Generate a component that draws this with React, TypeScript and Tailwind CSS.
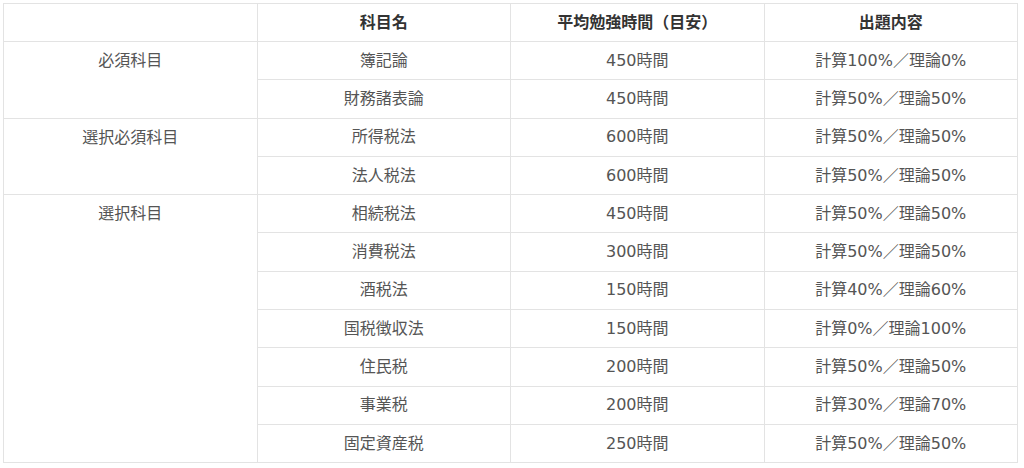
const groups = [
  {
    name: '必須科目',
    rows: [
      ['簿記論', '450時間', '計算100%／理論0%'],
      ['財務諸表論', '450時間', '計算50%／理論50%'],
    ],
  },
  {
    name: '選択必須科目',
    rows: [
      ['所得税法', '600時間', '計算50%／理論50%'],
      ['法人税法', '600時間', '計算50%／理論50%'],
    ],
  },
  {
    name: '選択科目',
    rows: [
      ['相続税法', '450時間', '計算50%／理論50%'],
      ['消費税法', '300時間', '計算50%／理論50%'],
      ['酒税法', '150時間', '計算40%／理論60%'],
      ['国税徴収法', '150時間', '計算0%／理論100%'],
      ['住民税', '200時間', '計算50%／理論50%'],
      ['事業税', '200時間', '計算30%／理論70%'],
      ['固定資産税', '250時間', '計算50%／理論50%'],
    ],
  },
]

const cell = 'border border-[#e3e3e3] px-2 text-center align-middle'

export default function App() {
  return (
    <div className="min-h-screen bg-white pt-[3px] pl-[3px] font-['DejaVu_Sans','Noto_Sans_CJK_JP',sans-serif] text-[16px] leading-6 text-[#555]">
      <table className="w-[1015px] table-fixed border-collapse">
        <thead>
          <tr className="h-[38px]">
            <th className={cell}></th>
            <th className={`${cell} font-bold text-[#333]`}>科目名</th>
            <th className={`${cell} font-bold text-[#333]`}>平均勉強時間（目安）</th>
            <th className={`${cell} font-bold text-[#333]`}>出題内容</th>
          </tr>
        </thead>
        <tbody>
          {groups.map((g) =>
            g.rows.map((r, i) => (
              <tr key={g.name + r[0]} className="h-[38.3px]">
                {i === 0 && (
                  <td rowSpan={g.rows.length} className={`${cell} !align-top pt-[7px]`}>
                    {g.name}
                  </td>
                )}
                <td className={cell}>{r[0]}</td>
                <td className={cell}>{r[1]}</td>
                <td className={cell}>{r[2]}</td>
              </tr>
            ))
          )}
        </tbody>
      </table>
    </div>
  )
}
